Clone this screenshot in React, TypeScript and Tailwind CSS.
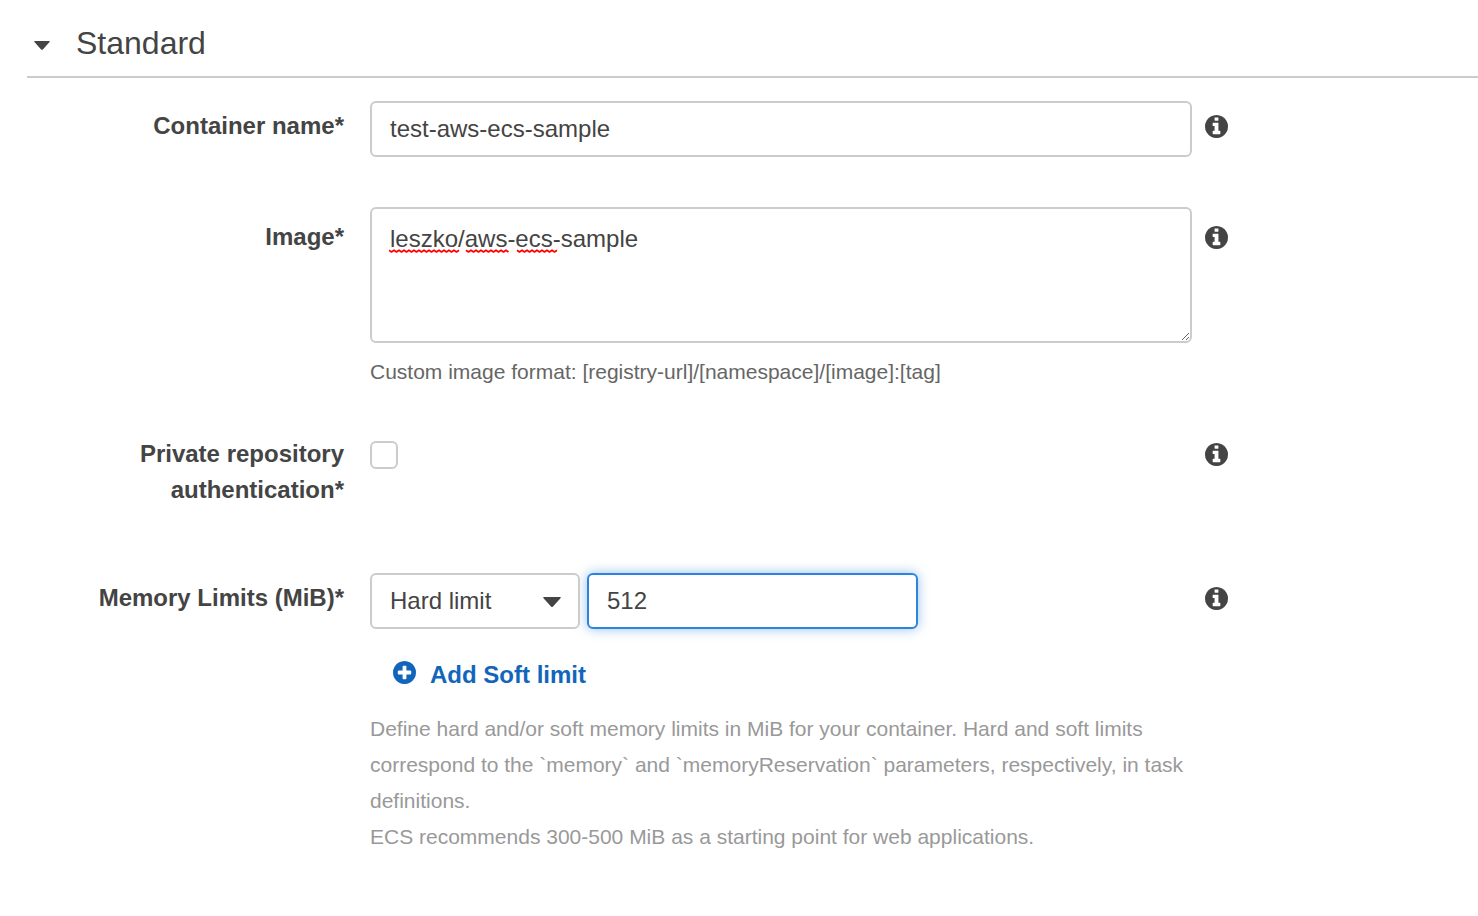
import { useState, type ReactNode } from "react";

const field =
  "h-14 rounded-md border-2 border-[#ccc] bg-white px-[18px] text-[#444] outline-none focus:border-[#2e84dc] focus:shadow-[0_0_12px_rgba(46,132,220,0.5)]";

const DISC =
  "m640 416q0 209-103 385.5t-279.5 279.5-385.5 103-385.5-103-279.5-279.5-103-385.5 103-385.5 279.5-279.5 385.5-103 385.5 103 279.5 279.5 103 385.5z";

function InfoIcon() {
  return (
    <svg viewBox="0 128 1536 1536" className="size-[23px]" fill="currentColor" aria-hidden="true">
      <path
        d={
          "M1024 1376v-160q0-14-9-23t-23-9h-96v-512q0-14-9-23t-23-9h-320q-14 0-23 9t-9 23v160q0 14 9 23t23 9h96v320h-96q-14 0-23 9t-9 23v160q0 14 9 23t23 9h448q14 0 23-9t9-23zm-128-896v-160q0-14-9-23t-23-9h-192q-14 0-23 9t-9 23v160q0 14 9 23t23 9h192q14 0 23-9t9-23z" +
          DISC
        }
      />
    </svg>
  );
}

function PlusIcon() {
  return (
    <svg viewBox="0 128 1536 1536" className="mb-[5px] size-[23px]" fill="currentColor" aria-hidden="true">
      <path d="M1216 960v-128q0-26-19-45t-45-19h-256v-256q0-26-19-45t-45-19h-128q-26 0-45 19t-19 45v256h-256q-26 0-45 19t-19 45v128q0 26 19 45t45 19h256v256q0 26 19 45t45 19h128q26 0 45-19t19-45v-256h256q26 0 45-19t19-45zm320-64q0 209-103 385.5t-279.5 279.5-385.5 103-385.5-103-279.5-279.5-103-385.5 103-385.5 279.5-279.5 385.5-103 385.5 103 279.5 279.5 103 385.5z" />
    </svg>
  );
}

function Caret({ className }: { className: string }) {
  return (
    <svg viewBox="0 0 18 10" className={className} fill="currentColor" aria-hidden="true">
      <path d="M1 0h16q1.6 0 .5 1.2L10 9.4q-1 1-2 0L.5 1.2Q-.6 0 1 0z" />
    </svg>
  );
}

function wave(from: number, to: number) {
  let d = `M${from} 1.2`;
  for (let x = from, down = true; x + 2.5 <= to; x += 2.5, down = !down) {
    d += `L${x + 2.5} ${down ? 3 : 1.2}`;
  }
  return d;
}

function SpellingMarks() {
  return (
    <svg
      className="pointer-events-none absolute top-[42px] left-[19px] h-1 w-[170px]"
      viewBox="0 0 170 4"
      fill="none"
      stroke="#f00"
      strokeWidth="1.7"
      strokeLinejoin="round"
      aria-hidden="true"
    >
      <path d={wave(0, 70)} />
      <path d={wave(77, 121)} />
      <path d={wave(128, 168)} />
    </svg>
  );
}

function Row({
  label,
  htmlFor,
  offset = "pt-[7px]",
  children,
}: {
  label: string;
  htmlFor: string;
  offset?: string;
  children: ReactNode;
}) {
  return (
    <div className="grid grid-cols-[minmax(0,317px)_minmax(0,821px)_auto] items-start">
      <label htmlFor={htmlFor} className={`${offset} justify-self-end pl-12 text-right font-bold`}>
        {label}*
      </label>
      <div className="-mr-[27px] ml-[26px]">{children}</div>
      <div className={`${offset} ml-10`}>
        <button type="button" aria-label={`About ${label}`} className="flex h-9 items-center">
          <InfoIcon />
        </button>
      </div>
    </div>
  );
}

export default function App() {
  const [open, setOpen] = useState(true);
  const [name, setName] = useState("test-aws-ecs-sample");
  const [image, setImage] = useState("leszko/aws-ecs-sample");
  const [memory, setMemory] = useState("512");

  return (
    <main className="min-h-screen bg-white pt-[19px] pb-12 pl-[27px] font-['Liberation_Sans',Arial,sans-serif] text-[24px] leading-9 text-[#444]">
      <h2 className="border-b-2 border-[#ccc] pb-[9px]">
        <button
          type="button"
          aria-expanded={open}
          onClick={() => setOpen(!open)}
          className="flex items-center gap-[26px] pl-[7px] text-[32px] leading-12"
        >
          <Caret className="mt-1 h-[9px] w-4" />
          Standard
        </button>
      </h2>

      {open && (
        <form className="pt-[23px]" onSubmit={(e) => e.preventDefault()}>
          <div className="flex flex-col">
            <Row label="Container name" htmlFor="name">
              <input
                id="name"
                className={`${field} block w-full`}
                value={name}
                onChange={(e) => setName(e.target.value)}
              />
            </Row>

            <div className="mt-[50px]">
              <Row label="Image" htmlFor="image" offset="pt-3">
                <div className="relative">
                  <textarea
                    id="image"
                    spellCheck={false}
                    className="block h-[136px] w-full resize-y rounded-md border-2 border-[#ccc] bg-white px-[18px] py-3 outline-none"
                    value={image}
                    onChange={(e) => setImage(e.target.value)}
                  />
                  {image === "leszko/aws-ecs-sample" && <SpellingMarks />}
                </div>
                <p className="mt-[11px] text-[21px] text-[#666]">
                  Custom image format: [registry-url]/[namespace]/[image]:[tag]
                </p>
              </Row>
            </div>

            <div className="mt-[46px]">
              <Row label="Private repository authentication" htmlFor="auth" offset="pt-0">
                <input
                  id="auth"
                  type="checkbox"
                  className="mt-[5px] block size-7 appearance-none rounded-md border-2 border-[#ccc] bg-white checked:bg-[#1166bb]"
                />
              </Row>
            </div>

            <div className="mt-[65px]">
              <Row label="Memory Limits (MiB)" htmlFor="memory">
                <div className="flex gap-[7px]">
                  <div className="relative w-[210px]">
                    <select aria-label="Limit type" className={`${field} w-full appearance-none`}>
                      <option>Hard limit</option>
                      <option>Soft limit</option>
                    </select>
                    <Caret className="pointer-events-none absolute top-6 right-[19px] h-[10px] w-[18px]" />
                  </div>
                  <input
                    id="memory"
                    className="h-14 w-[331px] min-w-0 rounded-md border-2 border-[#2e84dc] bg-white px-[18px] shadow-[0_0_12px_rgba(46,132,220,0.5)] outline-none"
                    value={memory}
                    onChange={(e) => setMemory(e.target.value)}
                  />
                </div>
                <button
                  type="button"
                  className="mt-7 ml-[23px] flex items-center gap-[14px] font-bold text-[#1166bb]"
                >
                  <PlusIcon />
                  Add Soft limit
                </button>
                <p className="mt-[18px] text-[21px] text-[#999]">
                  Define hard and/or soft memory limits in MiB for your container. Hard and soft limits
                  correspond to the `memory` and `memoryReservation` parameters, respectively, in task
                  definitions.
                  <br />
                  ECS recommends 300-500 MiB as a starting point for web applications.
                </p>
              </Row>
            </div>
          </div>
        </form>
      )}
    </main>
  );
}
